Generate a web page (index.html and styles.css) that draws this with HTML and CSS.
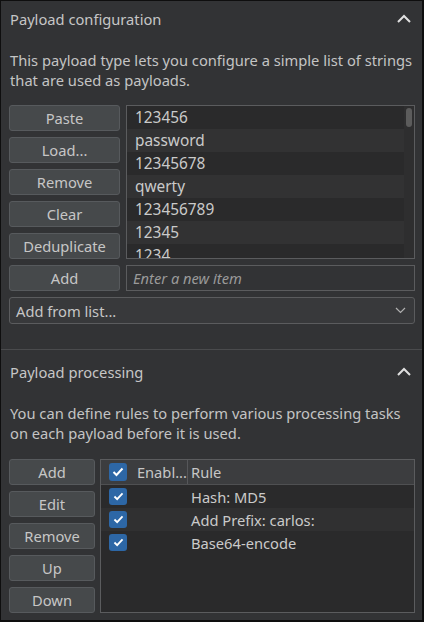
FILE: index.html
```html
<!DOCTYPE html>
<html>
<head>
<meta charset="utf-8">
<link rel="stylesheet" href="styles.css">
</head>
<body>
<div class="window">
  <section class="panel panel-config">
    <div class="panel-header">
      <span class="panel-title">Payload configuration</span>
      <svg class="chev-up" width="14" height="9" viewBox="0 0 14 9"><path d="M1 8 L7 2 L13 8" fill="none" stroke="#e0e0e0" stroke-width="2"/></svg>
    </div>
    <p class="desc">This payload type lets you configure a simple list of strings that are used as payloads.</p>
    <div class="config-grid">
      <div class="btn-col">
        <button class="btn">Paste</button>
        <button class="btn">Load...</button>
        <button class="btn">Remove</button>
        <button class="btn">Clear</button>
        <button class="btn">Deduplicate</button>
      </div>
      <div class="listbox">
        <div class="list-rows">
          <div class="list-row">123456</div>
          <div class="list-row">password</div>
          <div class="list-row">12345678</div>
          <div class="list-row">qwerty</div>
          <div class="list-row">123456789</div>
          <div class="list-row">12345</div>
          <div class="list-row">1234</div>
        </div>
        <div class="scrollbar"><div class="thumb"></div></div>
      </div>
      <button class="btn">Add</button>
      <div class="input"><span class="placeholder">Enter a new item</span></div>
    </div>
    <div class="combo">
      <span>Add from list...</span>
      <svg class="chev-down" width="11" height="7" viewBox="0 0 11 7"><path d="M1 1 L5.5 5.5 L10 1" fill="none" stroke="#b0b0b0" stroke-width="1.2"/></svg>
    </div>
  </section>
  <section class="panel panel-proc">
    <div class="panel-header">
      <span class="panel-title">Payload processing</span>
      <svg class="chev-up" width="14" height="9" viewBox="0 0 14 9"><path d="M1 8 L7 2 L13 8" fill="none" stroke="#e0e0e0" stroke-width="2"/></svg>
    </div>
    <p class="desc">You can define rules to perform various processing tasks on each payload before it is used.</p>
    <div class="proc-grid">
      <div class="btn-col">
        <button class="btn">Add</button>
        <button class="btn">Edit</button>
        <button class="btn">Remove</button>
        <button class="btn">Up</button>
        <button class="btn">Down</button>
      </div>
      <div class="table">
        <div class="thead">
          <div class="th th-enabled"><span class="cb"><svg width="12" height="10" viewBox="0 0 12 10"><path d="M1.5 5 L4.5 8 L10.5 1.5" fill="none" stroke="#fff" stroke-width="2"/></svg></span><span class="th-label">Enabl...</span></div>
          <div class="th th-rule">Rule</div>
        </div>
        <div class="tr"><div class="td-cb"><span class="cb sm"><svg width="11" height="9" viewBox="0 0 12 10"><path d="M1.5 5 L4.5 8 L10.5 1.5" fill="none" stroke="#fff" stroke-width="2"/></svg></span></div><div class="td-rule">Hash: MD5</div></div>
        <div class="tr alt"><div class="td-cb"><span class="cb sm"><svg width="11" height="9" viewBox="0 0 12 10"><path d="M1.5 5 L4.5 8 L10.5 1.5" fill="none" stroke="#fff" stroke-width="2"/></svg></span></div><div class="td-rule">Add Prefix: carlos:</div></div>
        <div class="tr"><div class="td-cb"><span class="cb sm"><svg width="11" height="9" viewBox="0 0 12 10"><path d="M1.5 5 L4.5 8 L10.5 1.5" fill="none" stroke="#fff" stroke-width="2"/></svg></span></div><div class="td-rule">Base64-encode</div></div>
      </div>
    </div>
  </section>
</div>
</body>
</html>
```
FILE: styles.css
```css
* { box-sizing: border-box; }
html, body { margin: 0; padding: 0; background: #0e0e0e; }
body {
  font-family: "Noto Sans", "Open Sans", sans-serif;
  font-size: 14.7px;
  color: #c9c9c9;
}
.window {
  width: 424px;
  height: 622px;
  border: 1px solid #0e0e0e;
  border-bottom-width: 2px;
  border-right-width: 2px;
  background: #323335;
  overflow: hidden;
}
.panel { padding: 0 7px 0 8px; }
.panel-config { height: 349px; border-bottom: 1px solid #4a4b4d; }
.panel-proc { padding-top: 4px; }
.panel-header {
  height: 36px;
  display: flex;
  align-items: center;
  justify-content: space-between;
  padding-left: 1px;
  padding-right: 4px;
}
.panel-title { font-size: 14.7px; color: #c6c6c6; }
.chev-up { display: block; margin-top: -2px; }
.desc {
  margin: 13px 0 16px 1px;
  line-height: 20px;
  font-size: 14.7px;
  color: #c4c4c4;
}
.btn {
  font-family: inherit;
  font-size: 14.7px;
  color: #c6c6c6;
  height: 26px;
  padding: 0;
  background: #46494b;
  border: 1px solid #575a5d;
  border-radius: 3px;
  width: 100%;
  line-height: 24px;
}
.btn-col { display: flex; flex-direction: column; gap: 6px; }
.config-grid {
  display: grid;
  grid-template-columns: 111px 289px;
  column-gap: 6px;
  row-gap: 6px;
  margin-top: -1px;
}
.listbox {
  height: 154px;
  border: 1px solid #5b5c5e;
  background: #2e2e2f;
  display: flex;
  overflow: hidden;
}
.list-rows { flex: 1; }
.list-row {
  height: 23px;
  line-height: 24px;
  padding-left: 8px;
  font-size: 15.4px;
  background: #2a2a2b;
  color: #cacaca;
}
.list-row:nth-child(even) { background: #323233; }
.scrollbar { width: 10px; padding: 2px 3px 0 2px; background: #2e2e2f; }
.thumb { width: 6px; height: 19px; border-radius: 3px; background: #5c5c5c; }
.input {
  height: 26px;
  border: 1px solid #5b5c5e;
  background: #323335;
  padding-left: 6px;
  line-height: 24px;
}
.placeholder { font-style: italic; color: #9a9a9a; }
.combo {
  margin: 6px 0 0 0;
  height: 27px;
  width: 406px;
  border: 1px solid #5b5c5e;
  border-radius: 3px;
  background: #38393b;
  display: flex;
  align-items: center;
  justify-content: space-between;
  padding: 0 8px 0 6px;
  color: #c6c6c6;
}
.chev-down { display: block; }
.proc-grid {
  display: grid;
  grid-template-columns: 86px 315px;
  column-gap: 5px;
  margin-top: 1px;
}
.table {
  height: 154px;
  border: 1px solid #5b5c5e;
  background: #2a2a2b;
}
.thead {
  height: 25px;
  display: flex;
  background: #3c3d3f;
  border-bottom: 1px solid #4f5052;
}
.th { display: flex; align-items: center; line-height: 24px; }
.th-enabled { width: 87px; padding-left: 8px; border-right: 1px solid #56575a; }
.th-label { margin-left: 10px; color: #c6c6c6; }
.th-rule { padding-left: 3px; color: #c6c6c6; }
.cb {
  width: 18px;
  height: 18px;
  border-radius: 3px;
  background: #2d67a6;
  display: inline-flex;
  align-items: center;
  justify-content: center;
}
.cb.sm { width: 18px; height: 17px; }
.tr { height: 23px; display: flex; align-items: center; }
.tr.alt { background: #303031; }
.td-cb { width: 88px; padding-left: 8px; display: flex; align-items: center; }
.td-rule { padding-left: 2px; color: #cacaca; }
```
